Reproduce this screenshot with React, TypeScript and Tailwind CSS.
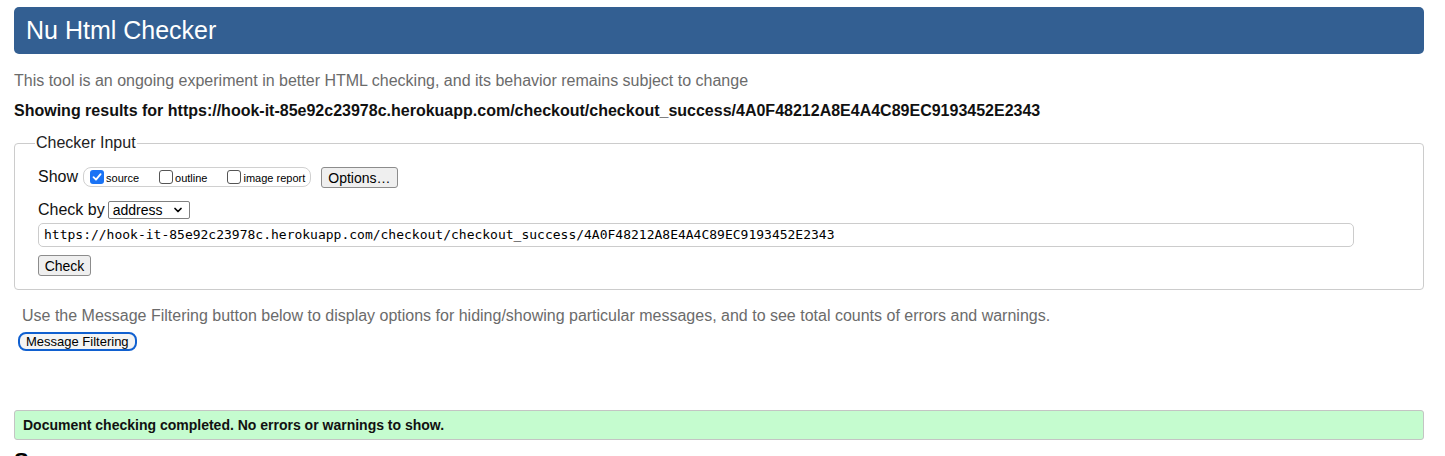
import { ChevronDown } from "lucide-react";

const url = "https://hook-it-85e92c23978c.herokuapp.com/checkout/checkout_success/4A0F48212A8E4A4C89EC9193452E2343";

const ShowOption = ({ label, checked }: { label: string; checked?: boolean }) => (
  <label className="flex items-center">
    {checked ? (
      <span className="w-[14px] h-[14px] rounded-[3px] bg-[#1a73f5] flex items-center justify-center">
        <svg width="12" height="12" viewBox="0 0 12 12">
          <path d="M2.5 6.2 L5 8.7 L9.6 3.2" stroke="white" strokeWidth="1.8" fill="none" strokeLinecap="round" strokeLinejoin="round" />
        </svg>
      </span>
    ) : (
      <span className="w-[14px] h-[14px] rounded-[3px] border border-[#555] bg-white" />
    )}
    <span className="text-[11px] text-black ml-[2px] mt-[3px]">{label}</span>
  </label>
);

export default function App() {
  return (
    <div className="bg-white h-[456px] overflow-hidden px-[14px] pt-[7px] text-black" style={{ fontFamily: '"Liberation Sans", Arial, Helvetica, sans-serif' }}>
      <div className="bg-[#335f92] h-[47px] w-[1410px] rounded-[5px] flex items-center pl-[12px]">
        <h1 className="text-white text-[25px] leading-none">Nu Html Checker</h1>
      </div>

      <p className="text-[#6b6b6b] text-[16px] leading-[20px] mt-[17px]">
        This tool is an ongoing experiment in better HTML checking, and its behavior remains subject to change
      </p>
      <p className="font-bold text-[16px] leading-[18px] mt-[11px] text-[#111]">Showing results for {url}</p>

      <fieldset className="border border-[#cccccc] rounded-[4px] w-[1410px] mt-[14px] px-[23px] pb-[11px]">
        <legend className="ml-[-3px] px-[1px] text-[16px] leading-[18px] text-[#222]">Checker Input</legend>

        <div className="flex items-center mt-[13px]">
          <span className="text-[16px] text-[#111] mr-[5px]">Show</span>
          <div className="flex items-center gap-[20px] border border-[#d0d0d0] rounded-[8px] h-[20px] pl-[6px] pr-[5px]">
            <ShowOption label="source" checked />
            <ShowOption label="outline" />
            <ShowOption label="image report" />
          </div>
          <button className="ml-[10px] h-[21px] px-[6px] text-[14px] bg-[#efefef] border border-[#8c8c8c] rounded-[3px] text-black">
            Options…
          </button>
        </div>

        <div className="flex items-center mt-[9px]">
          <span className="text-[16px] text-[#111] mr-[3px]">Check by</span>
          <div className="w-[82px] h-[18px] border border-[#808080] rounded-[2px] flex items-center justify-between pl-[4px] pr-[5px] text-[14px]">
            <span>address</span>
            <ChevronDown size={12} strokeWidth={3.5} />
          </div>
        </div>

        <div className="mt-[1px] w-[1316px] h-[24px] border border-[#cccccc] rounded-[5px] flex items-center px-[5px] text-[13px]" style={{ fontFamily: '"DejaVu Sans Mono", "Liberation Mono", monospace' }}>
          {url}
        </div>

        <button className="mt-[8px] h-[21px] w-[53px] text-[14px] bg-[#efefef] border border-[#8c8c8c] rounded-[3px] text-black">
          Check
        </button>
      </fieldset>

      <p className="text-[#6b6b6b] text-[16px] leading-[20px] mt-[16px] ml-[8px]">
        Use the Message Filtering button below to display options for hiding/showing particular messages, and to see total counts of errors and warnings.
      </p>
      <button className="mt-[6px] ml-[4px] h-[19px] px-[6px] text-[13px] border-2 border-[#1060d0] rounded-[8px] bg-[#f4f4f4] leading-none">
        Message Filtering
      </button>

      <div className="mt-[57px] w-[1410px] h-[30px] bg-[#c5fccf] border border-[#c4c4c4] rounded-[3px] flex items-center pl-[8px]">
        <p className="font-bold text-[14px] text-[#111]">Document checking completed. No errors or warnings to show.</p>
      </div>

      <h2 className="font-bold text-[22px] leading-[22px] mt-[10px]">Source</h2>
    </div>
  );
}
